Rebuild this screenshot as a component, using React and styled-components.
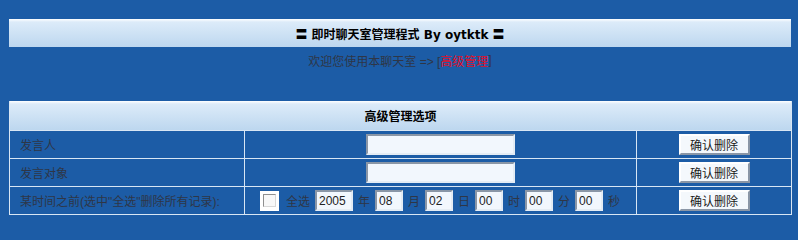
import React from 'react';
import styled, { createGlobalStyle } from 'styled-components';

const GlobalStyle = createGlobalStyle`
  body {
    margin: 0;
    background: #1c5ca6;
    font-family: "Liberation Sans", "Noto Sans CJK SC", sans-serif;
    font-size: 12px;
    color: #2e3646;
  }
`;

const Page = styled.div`
  padding: 19px 7px 0 9px;
`;

const TitleBar = styled.div`
  height: 28px;
  display: flex;
  align-items: center;
  justify-content: center;
  background: linear-gradient(#ffffff 0px, #dcebf9 3px, #bdd7ef 100%);
  font-family: "DejaVu Sans", "Noto Sans CJK SC", sans-serif;
  font-weight: bold;
  color: #000;
`;

const Welcome = styled.div`
  height: 26px;
  display: flex;
  align-items: center;
  justify-content: center;
  margin-bottom: 28px;
`;

const Red = styled.span`
  color: #e0102a;
`;

const Grid = styled.div`
  display: grid;
  grid-template-columns: 235px 392px 155px;
  width: 782px;
  border-left: 1px solid #d8e6f4;
`;

const HeadCell = styled.div`
  grid-column: 1 / -1;
  height: 29px;
  display: flex;
  align-items: center;
  justify-content: center;
  background: linear-gradient(#ffffff 0px, #dcebf9 3px, #bdd7ef 100%);
  font-weight: bold;
  color: #000;
  border-bottom: 1px solid #d8e6f4;
  border-right: 1px solid #d8e6f4;
`;

const Cell = styled.div`
  height: 27px;
  display: flex;
  align-items: center;
  justify-content: ${p => (p.$left ? 'flex-start' : 'center')};
  padding-left: ${p => (p.$left ? '10px' : '0')};
  border-right: 1px solid #d8e6f4;
  border-bottom: 1px solid #d8e6f4;
  gap: 4px;
`;

const TextInput = styled.input`
  box-sizing: border-box;
  width: ${p => p.$w || 149}px;
  height: 21px;
  margin: 0;
  padding: 1px 2px;
  background: #f2f7fd;
  border: 2px solid;
  border-color: #8a96a6 #e4ecf4 #e4ecf4 #8a96a6;
  font: 12px "Liberation Sans", "Noto Sans CJK SC", sans-serif;
  color: #222;
  outline: none;
`;

const Button = styled.button`
  box-sizing: border-box;
  width: 71px;
  height: 21px;
  margin: 0;
  padding: 0;
  background: #f4f8fc;
  border: 2px solid;
  border-color: #ffffff #8a96a6 #8a96a6 #ffffff;
  font: 12px "Liberation Sans", "Noto Sans CJK SC", sans-serif;
  color: #1a1a1a;
`;

const CheckWrap = styled.span`
  width: 19px;
  height: 20px;
  margin-right: 2px;
  background: #fff;
  display: flex;
  align-items: center;
  justify-content: center;
`;

const CheckBox = styled.span`
  width: 11px;
  height: 11px;
  border: 1px solid;
  border-color: #8f8f8f #d8d8d8 #d8d8d8 #8f8f8f;
  background: #f8f8f8;
`;

const Unit = styled.span`
  margin: 0 1px;
`;

const rows = [
  { label: '发言人' },
  { label: '发言对象' },
];

const timeFields = [
  { value: '2005', unit: '年', w: 38 },
  { value: '08', unit: '月', w: 28 },
  { value: '02', unit: '日', w: 28 },
  { value: '00', unit: '时', w: 28 },
  { value: '00', unit: '分', w: 28 },
  { value: '00', unit: '秒', w: 28 },
];

export default function App() {
  return (
    <Page>
      <GlobalStyle />
      <TitleBar>〓 即时聊天室管理程式 By oytktk 〓</TitleBar>
      <Welcome>
        欢迎您使用本聊天室 =&gt; [<Red>高级管理</Red>]
      </Welcome>
      <Grid>
        <HeadCell>高级管理选项</HeadCell>
        {rows.map(r => (
          <React.Fragment key={r.label}>
            <Cell $left>{r.label}</Cell>
            <Cell>
              <TextInput />
            </Cell>
            <Cell>
              <Button>确认删除</Button>
            </Cell>
          </React.Fragment>
        ))}
        <Cell $left>某时间之前(选中"全选"删除所有记录):</Cell>
        <Cell>
          <CheckWrap>
            <CheckBox />
          </CheckWrap>
          <Unit>全选</Unit>
          {timeFields.map((f, i) => (
            <React.Fragment key={i}>
              <TextInput $w={f.w} defaultValue={f.value} />
              <Unit>{f.unit}</Unit>
            </React.Fragment>
          ))}
        </Cell>
        <Cell>
          <Button>确认删除</Button>
        </Cell>
      </Grid>
    </Page>
  );
}
